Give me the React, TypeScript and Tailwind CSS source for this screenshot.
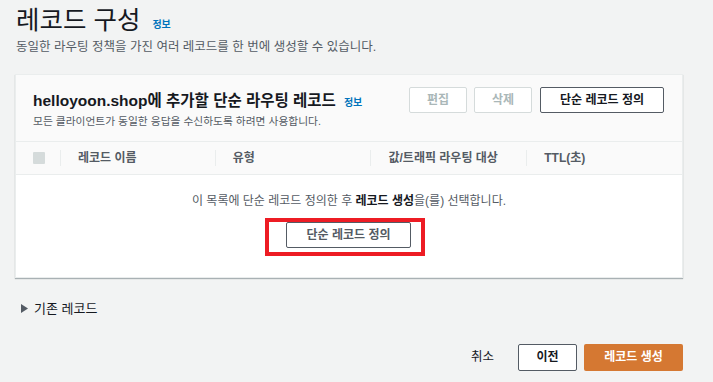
const font = "font-['Liberation_Sans','Noto_Sans_CJK_KR',sans-serif]";

const columns = ["레코드 이름", "유형", "값/트래픽 라우팅 대상", "TTL(초)"];

export default function App() {
  return (
    <div className={`${font} bg-[#f2f3f3] w-[713px] h-[382px] overflow-hidden text-[#16191f]`}>
      <div className="pl-[16px] pt-[5px]">
        <div className="flex items-end gap-[12px]">
          <h1 className="text-[25.5px] leading-[30px] font-normal">레코드 구성</h1>
          <span className="text-[10px] font-bold text-[#0073bb] mb-[3px]">정보</span>
        </div>
        <p className="text-[12.5px] leading-[16px] text-[#545b64] mt-[4px]">
          동일한 라우팅 정책을 가진 여러 레코드를 한 번에 생성할 수 있습니다.
        </p>
      </div>

      {/* records panel */}
      <div className="ml-[15px] mt-[19px] w-[668px] bg-white border border-[#eaeded] shadow-[0_1px_1px_0_rgba(0,28,36,0.3)]">
        <div className="bg-[#fafafa] flex justify-between px-[17px] pt-[12px] h-[67px] border-b border-[#eaeded]">
          <div className="pt-[4px]">
            <div className="flex items-baseline gap-[8px]">
              <h2 className="text-[15.5px] leading-[20px] font-bold">helloyoon.shop에 추가할 단순 라우팅 레코드</h2>
              <span className="text-[10px] font-bold text-[#0073bb]">정보</span>
            </div>
            <p className="text-[10.75px] leading-[14px] text-[#545b64] mt-[3px]">
              모든 클라이언트가 동일한 응답을 수신하도록 하려면 사용합니다.
            </p>
          </div>
          <div className="flex gap-[7px] pr-[1px]">
            <button className="h-[26px] w-[58px] border border-[#d5dbdb] bg-white text-[12px] font-bold text-[#aab7b8] rounded-[2px]">편집</button>
            <button className="h-[26px] w-[58px] border border-[#d5dbdb] bg-white text-[12px] font-bold text-[#aab7b8] rounded-[2px]">삭제</button>
            <button className="ml-[1px] h-[26px] w-[124px] border border-[#545b64] bg-white text-[12px] font-bold text-[#16191f] rounded-[2px]">단순 레코드 정의</button>
          </div>
        </div>

        <div className="bg-[#fafafa] h-[33px] flex items-center border-b border-[#eaeded]">
          <div className="w-[44px] pl-[17px] flex items-center">
            <span className="w-[12px] h-[12px] bg-[#d5dbdb] rounded-[1px]" />
          </div>
          {columns.map((c, i) => (
            <div key={c} className={`flex items-center h-full ${i === 0 ? "w-[155px]" : "w-[156px]"}`}>
              <span className="w-px h-[16px] bg-[#eaeded]" />
              <span className="pl-[17px] text-[12px] font-bold text-[#545b64]">{c}</span>
            </div>
          ))}
        </div>

        <div className="h-[102px] flex flex-col items-center pt-[18px]">
          <p className="text-[12px] leading-[16px] text-[#545b64]">
            이 목록에 단순 레코드 정의한 후 <span className="font-bold text-[#16191f]">레코드 생성</span>을(를) 선택합니다.
          </p>
          {/* red highlight around the button */}
          <div className="mt-[9px] mr-[8px] border-[4px] border-[#ed1c24] pl-[17px] pr-[10px] pt-0 pb-[4px]">
            <button className="h-[26px] w-[125px] border border-[#545b64] bg-white text-[12px] font-bold text-[#545b64] rounded-[2px]">단순 레코드 정의</button>
          </div>
        </div>
      </div>

      <div className="mt-[21px] ml-[21px] flex items-center gap-[6px] text-[13px] text-[#16191f]">
        <svg width="7" height="9" viewBox="0 0 7 9"><path d="M0 0 L7 4.5 L0 9 Z" fill="#545b64" /></svg>
        <span>기존 레코드</span>
      </div>

      <div className="mt-[25px] mr-[30px] flex justify-end items-center">
        <span className="text-[12.5px] text-[#16191f] mr-[24px]">취소</span>
        <button className="h-[27px] w-[59px] border border-[#545b64] bg-white text-[12px] font-bold text-[#16191f] rounded-[2px]">이전</button>
        <button className="ml-[7px] h-[27px] w-[99px] bg-[#d57832] text-[12px] font-bold text-white rounded-[2px]">레코드 생성</button>
      </div>
    </div>
  );
}
